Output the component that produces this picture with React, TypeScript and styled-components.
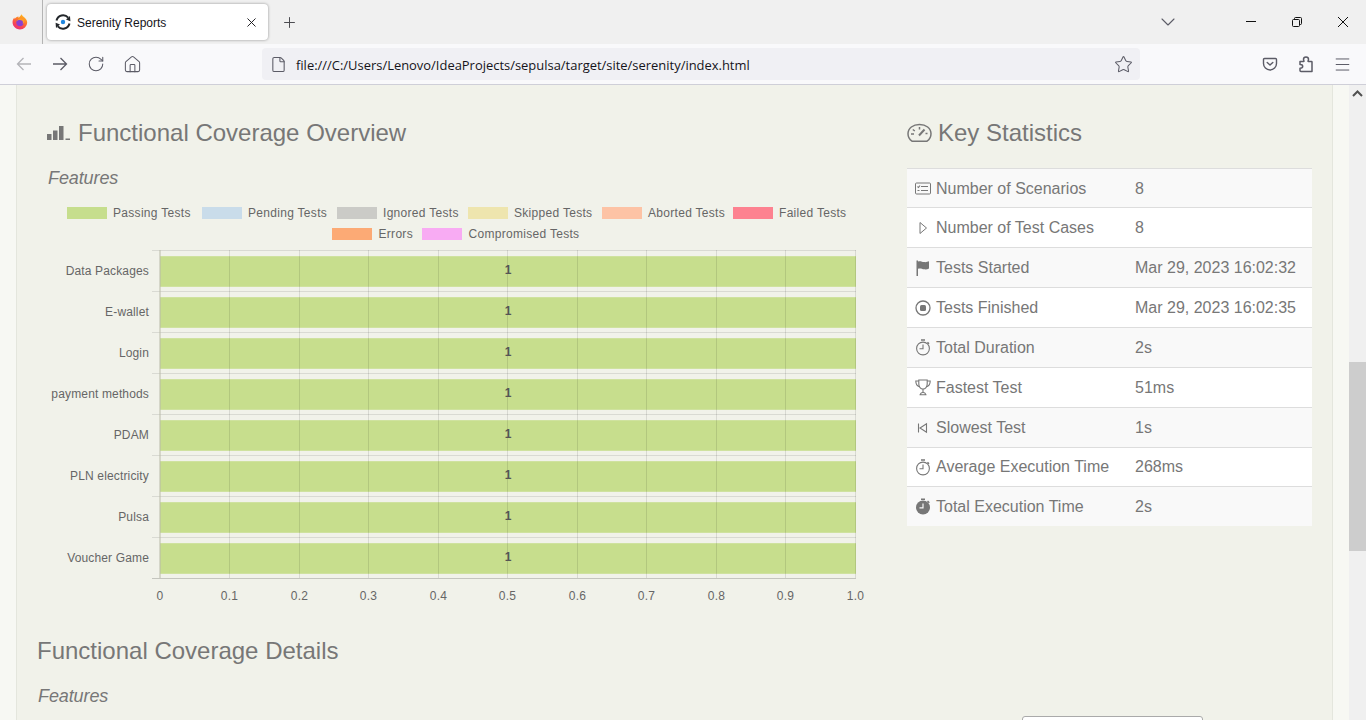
import React from 'react';
import styled, { createGlobalStyle } from 'styled-components';
import { RotateCw, House, File, Star, Menu, ChevronDown, Plus, X } from 'lucide-react';

const Global = createGlobalStyle`
  html, body { margin: 0; padding: 0; height: 100%; overflow: hidden; }
  body { font-family: "Liberation Sans", Arial, sans-serif; }
`;

const Shell = styled.div`
  width: 1366px; height: 720px; display: flex; flex-direction: column; overflow: hidden; background: #f7f8f3;
`;
const TabBar = styled.div`
  height: 44px; display: flex; align-items: center; background: #f0f0f0; flex: none;
`;
const FirefoxButton = styled.div`
  width: 40px; height: 44px; display: flex; align-items: center; justify-content: center;
  border-right: 1px solid #b4b4b4; box-sizing: content-box; flex: none; padding-right: 2px;
`;
const Tab = styled.div`
  margin-left: 4px; width: 221px; height: 36px; background: #fff; border-radius: 4px;
  box-shadow: 0 0 3px rgba(0,0,0,.4); display: flex; align-items: center; padding: 0 9px 0 8px;
  box-sizing: border-box; flex: none; color: #15141a;
`;
const TabTitle = styled.span`
  font-size: 12px; line-height: 16px; padding-top: 2px; margin-left: 6px; flex: 1; white-space: nowrap; color: #15141a;
`;
const NewTab = styled.div`
  width: 42px; display: flex; justify-content: center; color: #4a4a4f; flex: none;
`;
const Spacer = styled.div`flex: 1;`;
const TabList = styled.div`
  width: 46px; margin-right: 37px; display: flex; justify-content: center; color: #5b5b66; flex: none;
`;
const WinButton = styled.div`
  width: 46px; height: 44px; display: flex; align-items: center; justify-content: center; color: #111; flex: none;
`;
const ToolBar = styled.div`
  height: 41px; flex: none; display: flex; align-items: center; background: #f9f9fb;
  border-bottom: 1px solid #cfcfd8; box-sizing: border-box; padding: 0 6px;
`;
const NavButton = styled.div<{ $dim?: boolean }>`
  width: 36px; height: 32px; display: flex; align-items: center; justify-content: center; flex: none;
  color: ${p => (p.$dim ? '#b4b4b8' : '#5b5b66')};
`;
const UrlBar = styled.div`
  margin-left: 112px; width: 878px; height: 32px; border-radius: 4px; background: #f0f0f4; flex: none;
  display: flex; align-items: center; padding: 0 7px 0 8px; box-sizing: border-box; color: #5b5b66;
`;
const UrlText = styled.span`
  font-family: "Open Sans", sans-serif; font-size: 12.95px; line-height: 18px; padding-top: 2px;
  margin-left: 9px; flex: 1; color: #15141a; white-space: nowrap;
`;
const Viewport = styled.div`
  flex: 1; min-height: 0; display: flex; overflow: hidden;
`;
const Gutter = styled.div<{ $side: 'left' | 'right' }>`
  width: 16px; flex: none; background: #f7f8f3;
  ${p => (p.$side === 'left' ? 'border-right: 1px solid #e4e6dd;' : 'border-left: 1px solid #e4e6dd;')}
`;
const Content = styled.main`
  width: 1315px; flex: none; background: #f1f2ea; box-sizing: border-box; padding-top: 33px; overflow: hidden;
`;
const Scrollbar = styled.div`
  width: 17px; flex: none; background: #f0f0f0; display: flex; flex-direction: column; align-items: center;
  color: #505050; position: relative;
`;
const ScrollThumb = styled.div`
  position: absolute; left: 0; right: 0; top: 277px; height: 189px; background: #cdcdcd;
`;
const ScrollArrow = styled.div`
  height: 17px; display: flex; align-items: center; justify-content: center;
`;
const Overview = styled.section`
  display: grid; grid-template-columns: 818px 405px; column-gap: 42px; padding-left: 30px;
`;
const Heading = styled.h2<{ $gap?: number }>`
  margin: 0 0 20px; height: 30px; font-size: 24px; line-height: 30px; font-weight: 400; color: #777;
  display: flex; align-items: center; gap: ${p => p.$gap ?? 0}px; white-space: nowrap;
`;
const SubHeading = styled.h3`
  margin: 0; height: 20px; padding-left: 1px; font-size: 18px; line-height: 20px; font-weight: 400; font-style: italic;
  color: #777; letter-spacing: -.1px;
`;
const Legend = styled.div`
  display: flex; flex-wrap: wrap; justify-content: center; gap: 5px 11px; margin-top: 17px; width: 818px;
`;
const LegendItem = styled.div<{ $w: number }>`
  display: flex; align-items: center; gap: 6.5px; height: 16px; width: ${p => p.$w}px; font-size: 12px; color: #666;
  white-space: nowrap; letter-spacing: .3px;
`;
const Swatch = styled.span<{ $c: string }>`
  width: 40px; height: 12px; background: ${p => p.$c}; display: block; flex: none;
`;
const ChartSvg = styled.svg`
  display: block; width: 818px; height: 368px;
  font-family: "Liberation Sans", Arial, sans-serif; font-size: 12px;
`;
const StatTable = styled.div`
  display: flex; flex-direction: column; font-size: 16px; color: #777;
`;
const StatRow = styled.div<{ $h: number; $odd: boolean }>`
  height: ${p => p.$h}px; box-sizing: border-box; border-top: 1px solid #ddd;
  background: ${p => (p.$odd ? '#f9f9f9' : '#fff')};
  display: grid; grid-template-columns: 228px 1fr; align-items: center;
  &:first-child { padding-top: 1px; }
`;
const StatLabel = styled.div`
  display: flex; align-items: center; padding-left: 8px; white-space: nowrap;
`;
const StatIcon = styled.span`
  width: 21px; flex: none; display: flex; color: #777;
`;
const StatValue = styled.div`white-space: nowrap;`;
const Details = styled.section`
  margin-top: 26px; padding-left: 20px;
`;
const SearchRow = styled.div`
  display: flex; justify-content: flex-end; margin-top: 10px; padding-right: 129px;
`;
const SearchBox = styled.div`
  width: 181px; height: 30px; box-sizing: border-box; border: 1px solid #aaa; border-radius: 3px; background: #fff;
`;

const Firefox = () => (
  <svg width="16" height="16" viewBox="0 0 16 16">
    <defs>
      <linearGradient id="ffa" x1="0.75" y1="0" x2="0.25" y2="1">
        <stop offset="0" stopColor="#ffc21f" />
        <stop offset=".4" stopColor="#ff7a2a" />
        <stop offset=".75" stopColor="#f5405a" />
        <stop offset="1" stopColor="#e8307f" />
      </linearGradient>
    </defs>
    <path d="M8 15.6A7.4 7.4 0 0 1 .9 6c.4-1.1 1-2 1.6-2.6-.1.7 0 1.3.2 1.6C3.6 3.400 5 2.600 6.600 2.400c-.3.6-.2 1 .2 1.300.8-.8 1.800-2 2.800-3.400.4 1.600 2 2.400 3.400 3.800 1.200 1.300 2.200 2.800 2.200 4.600A7.300 7.300 0 0 1 8 15.600z" fill="url(#ffa)" />
    <circle cx="8" cy="8.600" r="3.700" fill="#8a3fd1" />
    <path d="M4.600 7.400c1.400-1.600 3.800-1.800 5.400-.8 1 .7 1.300 2.200.6 3.300 1.200-.6 2-1.800 1.800-3.200C11.600 4.800 9.400 4 7.800 4.400 6 4.800 5 6 4.600 7.400z" fill="#ff9d2a" />
  </svg>
);

const Serenity = () => (
  <svg width="16" height="16" viewBox="0 0 16 16" fill="none">
    <path d="M1.500 6.500A6.800 6.800 0 0 1 13.200 3.600" stroke="#23272b" strokeWidth="2" />
    <path d="M14.500 9.500A6.800 6.800 0 0 1 2.800 12.400" stroke="#23272b" strokeWidth="2" />
    <path d="M11 5.600 15 2l.4 5.200z" fill="#23272b" />
    <path d="M5 10.400 1 14l-.4-5.200z" fill="#23272b" />
    <circle cx="8" cy="8" r="2.200" fill="#1f87e0" />
  </svg>
);

const ArrowL = () => (
  <svg width="16" height="16" viewBox="0 0 16 16" fill="none" stroke="currentColor" strokeWidth="1.300">
    <path d="M15 8H1.500M7.500 2l-6 6 6 6" />
  </svg>
);
const ArrowR = () => (
  <svg width="16" height="16" viewBox="0 0 16 16" fill="none" stroke="currentColor" strokeWidth="1.300">
    <path d="M1 8h13.500M8.500 2l6 6-6 6" />
  </svg>
);
const Restore = () => (
  <svg width="12" height="12" viewBox="0 0 12 12" fill="none" stroke="#111" strokeWidth="1">
    <rect x="1.500" y="3.500" width="7" height="7" rx="1" />
    <path d="M3.500 3.500V2.500a1 1 0 0 1 1-1h5a1 1 0 0 1 1 1v5a1 1 0 0 1-1 1h-1" />
  </svg>
);
const Minimize = () => (
  <svg width="12" height="12" viewBox="0 0 12 12"><path d="M1 5.500h10" stroke="#111" strokeWidth="1" /></svg>
);
const CloseWin = () => (
  <svg width="12" height="12" viewBox="0 0 12 12"><path d="M1 1l10 10M11 1 1 11" stroke="#111" strokeWidth="1" /></svg>
);
const Pocket = () => (
  <svg width="16" height="16" viewBox="0 0 16 16" fill="none" stroke="currentColor" strokeWidth="1.400" strokeLinecap="round" strokeLinejoin="round">
    <path d="M2.500 2.500h11c.6 0 1 .4 1 1v4a6.500 6.500 0 0 1-13 0v-4c0-.6.4-1 1-1z" />
    <path d="M5.200 6.500 8 9l2.800-2.500" />
  </svg>
);
const PuzzlePiece = () => (
  <svg width="16" height="17" viewBox="0 0 16 17" fill="none" stroke="currentColor" strokeWidth="1.500" strokeLinejoin="round">
    <path d="M2 5.500h3.600c.4 0 .6-.4.4-.7-.3-.5-.5-1-.5-1.500C5.500 2 6.600 1 8 1s2.500 1 2.500 2.300c0 .5-.2 1-.5 1.500-.2.3 0 .7.4.7h3.100c.3 0 .5.200.5.500V15.500H3c-.6 0-1-.4-1-1V12.200c1.600 0 2.700-.7 2.700-2S3.600 8.500 2 8.500z" />
  </svg>
);

const Bars = () => (
  <svg width="24" height="14" viewBox="0 0 24 14" fill="#777">
    <rect x="0" y="8" width="4.500" height="6" />
    <rect x="6" y="4.500" width="4.500" height="9.500" />
    <rect x="12" y="0" width="4.500" height="14" />
    <rect x="18.500" y="12.500" width="4.500" height="1.500" />
  </svg>
);
const Gauge = () => (
  <svg width="25" height="20" viewBox="0 0 25 20" fill="none" stroke="#777" strokeWidth="1.500">
    <path d="M5 18.200h15c2.400-1.600 4-4.400 4-7.400C24 5.100 18.900 1.500 12.500 1.500S1 5.100 1 10.800c0 3 1.600 5.800 4 7.400z" />
    <path d="M12 12.500 17.500 6.500" strokeWidth="2" />
    <path d="M4 11h3M5.800 6.500l2 1.500M12.500 4v2.500M18.500 10.500h2" />
  </svg>
);
const ListAlt = () => (
  <svg width="16" height="13" viewBox="0 0 16 13" fill="none" stroke="#777" strokeWidth="1">
    <rect x=".5" y="1" width="15" height="11" rx="1" />
    <path d="M6 4.500h7M6 8.500h7" />
    <path d="M2.500 4.500 3.500 5.500 5 3.500M2.500 8.500h2" strokeWidth="1.100" />
  </svg>
);
const CaretOutline = () => (
  <svg width="16" height="14" viewBox="0 0 16 14" fill="none" stroke="#777" strokeWidth="1">
    <path d="M5 1.500v11l6.500-5.500z" />
  </svg>
);
const Flag = () => (
  <svg width="16" height="16" viewBox="0 0 16 16">
    <rect x="1.500" y="0.500" width="1.500" height="15.500" fill="#777" />
    <path d="M3 1.500c2.500-1 4 .3 6 .6 2 .3 3.500-.2 5-.8v7.200c-1.500.8-3 1.200-5 .8-2-.4-3.500-1.400-6-.6z" fill="#777" />
  </svg>
);
const StopCircle = () => (
  <svg width="16" height="16" viewBox="0 0 16 16" fill="none">
    <circle cx="8" cy="8" r="7" stroke="#777" strokeWidth="1.300" />
    <rect x="5" y="5" width="6" height="6" rx="1.500" fill="#777" />
  </svg>
);
const Stopwatch = () => (
  <svg width="16" height="17" viewBox="0 0 16 17" fill="none" stroke="#777" strokeWidth="1.100">
    <circle cx="8" cy="9.500" r="6.400" />
    <path d="M8 5.500v4.300H4.500" />
    <path d="M6 1h4" strokeWidth="1.500" />
    <path d="M12.500 3.200 14 4.700" strokeWidth="1.500" />
  </svg>
);
const StopwatchFilled = () => (
  <svg width="16" height="17" viewBox="0 0 16 17">
    <circle cx="8" cy="9.500" r="7" fill="#777" />
    <rect x="6" y="0.500" width="4" height="1.500" fill="#777" />
    <path d="M12.500 3 14.300 4.800" stroke="#777" strokeWidth="1.500" />
    <path d="M8 5.500v4.300H4.500" fill="none" stroke="#f9f9f9" strokeWidth="1.200" />
  </svg>
);
const Trophy = () => (
  <svg width="16" height="17" viewBox="0 0 16 17" fill="none" stroke="#777" strokeWidth="1.100">
    <path d="M3.800 1h8.400v4c0 3-1.800 5-4.200 5S3.800 8 3.800 5z" />
    <path d="M3.800 2H.8c0 3 1 5 3.800 5.800M12.200 2h3c0 3-1 5-3.800 5.800" />
    <path d="M8 10v3.500" />
    <path d="M4.500 15.800h7M5.500 15.500c0-1.200 1-2 2.500-2s2.500.8 2.500 2" />
  </svg>
);
const StepBack = () => (
  <svg width="16" height="12" viewBox="0 0 16 12" fill="none" stroke="#777" strokeWidth="1.100">
    <path d="M3.500 1.500v9" />
    <path d="M11.500 1.800v8.400L5 6z" />
  </svg>
);

const categories = ['Data Packages', 'E-wallet', 'Login', 'payment methods', 'PDAM', 'PLN electricity', 'Pulsa', 'Voucher Game'];
const tickXs = [160, 229.5, 299.5, 368.5, 438.5, 507.5, 577.5, 646.5, 716.5, 785.5, 855.5];
const tickLabels = ['0', '0.1', '0.2', '0.3', '0.4', '0.5', '0.6', '0.7', '0.8', '0.9', '1.0'];
const legend: [string, string, number][] = [
  ['Passing Tests', '#c6de8d', 124],
  ['Pending Tests', '#c9dcea', 124],
  ['Ignored Tests', '#cbcbc7', 120],
  ['Skipped Tests', '#eee5ae', 123],
  ['Aborted Tests', '#fdc3a5', 120],
  ['Failed Tests', '#fd8290', 113],
  ['Errors', '#fcaa75', 79],
  ['Compromised Tests', '#f8abf3', 158],
];

const Chart = () => (
  <ChartSvg viewBox="47 242 818 368">
    {categories.map((c, i) => (
      <React.Fragment key={c}>
        <path d={`M152 ${250.5 + i * 41}H856`} stroke="#d9dad3" />
        <rect x="160" y={256 + i * 41} width="696" height="31" fill="#c7de8d" />
        <rect x="160" y={256 + i * 41} width="696" height="1" fill="#cfe29f" />
        <rect x="160" y={286 + i * 41} width="696" height="1" fill="#cfe29f" />
        <text x="149" y={275 + i * 41} textAnchor="end" fill="#666" letterSpacing=".15">{c}</text>
      </React.Fragment>
    ))}
    <path d="M152 578.500H856" stroke="#c4c5be" />
    {tickXs.map((x, i) => (
      <React.Fragment key={x}>
        <path d={`M${x} 250V578`} stroke={i === 0 ? '#b9baa9' : 'rgba(0,0,0,.1)'} />
        <text x={x} y="600" textAnchor="middle" fill="#666" letterSpacing=".2">{tickLabels[i]}</text>
      </React.Fragment>
    ))}
    {categories.map((c, i) => (
      <text key={c} x="508" y={274 + i * 41} textAnchor="middle" fill="#555" fontWeight="700">1</text>
    ))}
  </ChartSvg>
);

const stats: [React.ReactNode, string, string, number][] = [
  [<ListAlt />, 'Number of Scenarios', '8', 39],
  [<CaretOutline />, 'Number of Test Cases', '8', 40],
  [<Flag />, 'Tests Started', 'Mar 29, 2023 16:02:32', 40],
  [<StopCircle />, 'Tests Finished', 'Mar 29, 2023 16:02:35', 40],
  [<Stopwatch />, 'Total Duration', '2s', 40],
  [<Trophy />, 'Fastest Test', '51ms', 40],
  [<StepBack />, 'Slowest Test', '1s', 40],
  [<Stopwatch />, 'Average Execution Time', '268ms', 39],
  [<StopwatchFilled />, 'Total Execution Time', '2s', 40],
];

export default function App() {
  return (
    <Shell>
      <Global />
      <TabBar>
        <FirefoxButton><Firefox /></FirefoxButton>
        <Tab>
          <Serenity />
          <TabTitle>Serenity Reports</TabTitle>
          <X size={15} strokeWidth={1.5} />
        </Tab>
        <NewTab><Plus size={17} strokeWidth={1.4} /></NewTab>
        <Spacer />
        <TabList><ChevronDown size={24} strokeWidth={1.1} /></TabList>
        <WinButton><Minimize /></WinButton>
        <WinButton><Restore /></WinButton>
        <WinButton><CloseWin /></WinButton>
      </TabBar>
      <ToolBar>
        <NavButton $dim><ArrowL /></NavButton>
        <NavButton><ArrowR /></NavButton>
        <NavButton><RotateCw size={18} strokeWidth={1.4} /></NavButton>
        <NavButton><House size={19} strokeWidth={1.3} /></NavButton>
        <UrlBar>
          <File size={17} strokeWidth={1.5} />
          <UrlText>file:///C:/Users/Lenovo/IdeaProjects/sepulsa/target/site/serenity/index.html</UrlText>
          <Star size={19} strokeWidth={1.3} />
        </UrlBar>
        <Spacer />
        <NavButton><Pocket /></NavButton>
        <NavButton><PuzzlePiece /></NavButton>
        <NavButton><Menu size={19} strokeWidth={1.25} /></NavButton>
      </ToolBar>
      <Viewport>
        <Gutter $side="left" />
        <Content>
          <Overview>
            <div>
              <Heading $gap={7}><Bars />Functional Coverage Overview</Heading>
              <SubHeading>Features</SubHeading>
              <Legend>
                {legend.map(([name, c, w]) => (
                  <LegendItem key={name} $w={w}><Swatch $c={c} />{name}</LegendItem>
                ))}
              </Legend>
              <Chart />
            </div>
            <div>
              <Heading $gap={6}><Gauge />Key Statistics</Heading>
              <StatTable>
                {stats.map(([icon, label, value, h], i) => (
                  <StatRow key={label} $h={h} $odd={i % 2 === 0}>
                    <StatLabel><StatIcon>{icon}</StatIcon>{label}</StatLabel>
                    <StatValue>{value}</StatValue>
                  </StatRow>
                ))}
              </StatTable>
            </div>
          </Overview>
          <Details>
            <Heading>Functional Coverage Details</Heading>
            <SubHeading>Features</SubHeading>
            <SearchRow><SearchBox /></SearchRow>
          </Details>
        </Content>
        <Gutter $side="right" />
        <Scrollbar>
          <ScrollThumb />
          <ScrollArrow>
            <svg width="11" height="7" viewBox="0 0 11 7" fill="none" stroke="#505050" strokeWidth="2"><path d="M1 6l4.500-4.500L10 6" /></svg>
          </ScrollArrow>
        </Scrollbar>
      </Viewport>
    </Shell>
  );
}
